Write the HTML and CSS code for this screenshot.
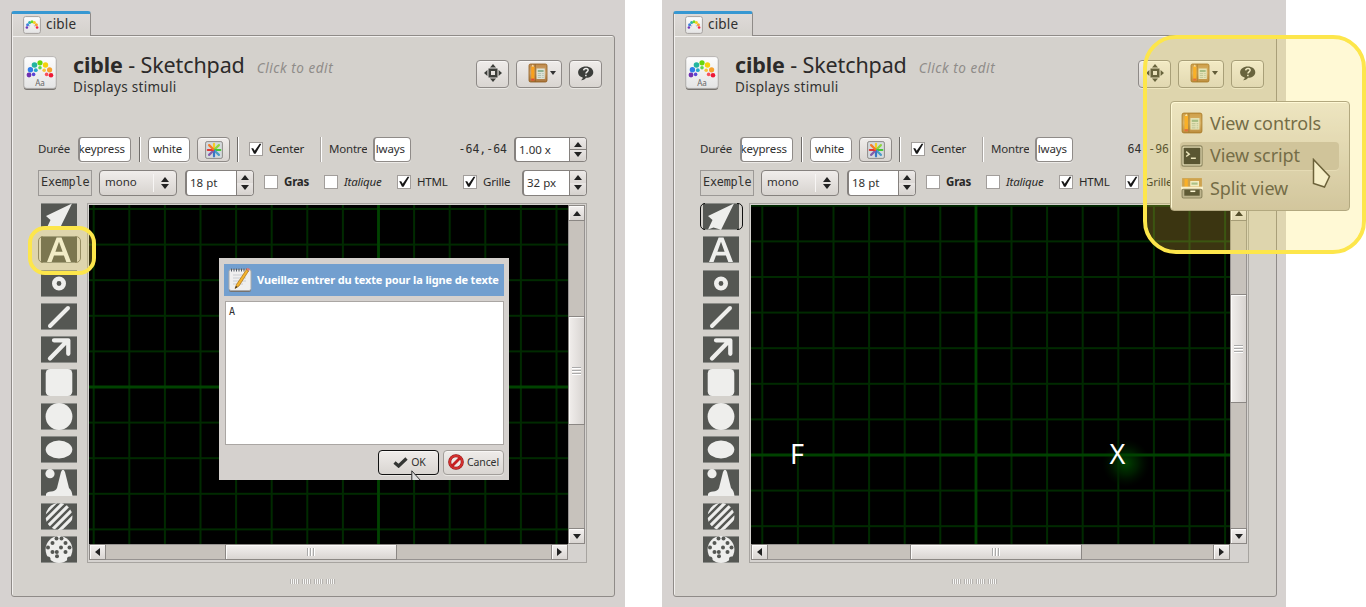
FILE: index.html
```html
<!DOCTYPE html>
<html lang="fr">
<head>
<meta charset="utf-8">
<title>cible - Sketchpad</title>
<link rel="stylesheet" href="styles.css">
</head>
<body>
<svg class="defs" width="0" height="0">
  <defs>
    <linearGradient id="paper" x1="0" y1="0" x2="0" y2="1"><stop offset="0" stop-color="#fdfdfd"/><stop offset="1" stop-color="#e4e4e4"/></linearGradient>
    <linearGradient id="wood" x1="0" y1="0" x2="0" y2="1"><stop offset="0" stop-color="#c08a4a"/><stop offset=".5" stop-color="#cda673"/><stop offset="1" stop-color="#a8733a"/></linearGradient>
    <radialGradient id="glow"><stop offset="0" stop-color="#004400"/><stop offset=".5" stop-color="#002600" stop-opacity=".75"/><stop offset="1" stop-color="#001000" stop-opacity="0"/></radialGradient>
    <symbol id="i-pad" viewBox="0 0 34 35">
      <rect x=".8" y="1.6" width="32.4" height="32.4" rx="3" fill="#77736f"/>
      <rect x=".8" y=".6" width="32.4" height="31.8" rx="3" fill="url(#paper)" stroke="#aaa7a4" stroke-width=".8"/>
      <circle cx="6" cy="19" r="2.4" fill="#7030b0"/><circle cx="7.4" cy="13.8" r="2.7" fill="#2f7de8"/><circle cx="11.5" cy="9" r="2.8" fill="#22b5a0"/><circle cx="17" cy="6.8" r="2.6" fill="#68d60c"/><circle cx="22.5" cy="9" r="2.7" fill="#f5d20a"/><circle cx="26.6" cy="13.8" r="2.6" fill="#f7a12c"/><circle cx="28" cy="19.2" r="2.3" fill="#ee1836"/>
      <circle cx="10.6" cy="18.4" r="1.8" fill="#5a46d6"/><circle cx="12.8" cy="14.2" r="1.9" fill="#27a8c8"/><circle cx="17" cy="11.8" r="1.8" fill="#5cd850"/><circle cx="21.2" cy="14.2" r="1.8" fill="#f7c63a"/><circle cx="23.6" cy="18.4" r="1.8" fill="#f8505a"/>
      <text x="17" y="30" text-anchor="middle" class="pad-text">Aa</text>
    </symbol>
    <symbol id="i-tab" viewBox="0 0 18 18">
      <rect x=".6" y=".6" width="16.8" height="16.8" rx="2" fill="url(#paper)" stroke="#a5a19e"/>
      <g><circle cx="3.900" cy="11.500" r="1.300" fill="#7038b8"/><circle cx="4.600" cy="8.700" r="1.500" fill="#4080dd"/><circle cx="6.600" cy="6.600" r="1.500" fill="#2bb0b0"/><circle cx="9" cy="5.800" r="1.500" fill="#6bd827"/><circle cx="11.400" cy="6.600" r="1.500" fill="#f5d020"/><circle cx="13.400" cy="8.700" r="1.500" fill="#f8a131"/><circle cx="14.100" cy="11.500" r="1.300" fill="#f4264b"/><path d="M6 10.800l1-2M12 10.800l-1-2" stroke="#c9b3d8"/></g>
    </symbol>
    <symbol id="i-full" viewBox="0 0 18 18"><g fill="#3c3e3a"><path d="M9 0l3 3.4H6zM9 18l3-3.4H6zM0 9l3.4-3v6zM18 9l-3.4-3v6z"/><path d="M4.5 4.5h9v9h-9zM7 7v4h4V7z" fill-rule="evenodd"/></g></symbol>
    <symbol id="i-book" viewBox="0 0 20 20">
      <rect x="1" y="1" width="18" height="18" rx="1.6" fill="url(#wood)" stroke="#8f5a1c" stroke-width=".8"/>
      <path d="M7.200 1.4v17.2" stroke="#81531e" stroke-width=".7"/>
      <path d="M3.2 4.2L4.8 1.8l1.6 2.4v13H3.2z" fill="#f9a11d"/><path d="M4.8 1.6l1.2 2H3.6z" fill="#f7e5c4"/><path d="M3.2 15.6h3.2v2H3.2z" fill="#d84e37"/>
      <rect x="8.6" y="5.500" width="8.2" height="10.500" fill="#dde3d8"/><path d="M9.8 7h5.8v2H9.8z" fill="#8db193"/><path d="M9.8 10.6h3.4M9.8 12.5h3.4M9.8 14.4h3.4M14.2 10.6h1.5M14.2 12.5h1.5M14.2 14.4h1.5" stroke="#b1c0b0"/>
    </symbol>
    <symbol id="i-term" viewBox="0 0 20 20"><rect x=".8" y=".8" width="18.4" height="18.4" rx="1.8" fill="#d9d7d2" stroke="#6c6a67"/><rect x="2.4" y="2.4" width="15.2" height="15.2" rx=".8" fill="#292b2b"/><path d="M4.700 6L7.500 8.300l-2.800 2.200M9 12h4.500" fill="none" stroke="#e4e4dc" stroke-width="1.300"/></symbol>
    <symbol id="i-split" viewBox="0 0 20 20"><path d="M1 1h18v9H1z" fill="#c09050"/><path d="M3.2 2h3v7h-3z" fill="#f9a11d"/><path d="M8.4 3.6h8v5h-8z" fill="#edf0e7"/><path d="M9.5 5h5.6v2H9.5z" fill="#94b69a"/><path d="M0 8.800h20v2.400H0z" fill="#f7f5f1"/><rect x="1" y="11.2" width="18" height="7.900" rx="1.3" fill="#a9a6a0" stroke="#6c6a67"/><path d="M3 11.500h14v5.500H3z" fill="#303230"/><path d="M8.500 13h4.500" stroke="#fff" stroke-width="1.400"/></symbol>
    <symbol id="i-help" viewBox="0 0 18 16"><path d="M9.3.5c4.6 0 8 2.5 8 6.1s-3.4 6-7.8 6c-.9 1.5-2.8 2.6-5.2 2.5 1.2-.9 1.8-1.8 1.7-2.9C3.100 11.400 1.100 9.500 1.100 6.800 1.100 3.100 4.700.5 9.300.5z" fill="#3c3e3b"/><path d="M7 4.700c.4-2.900 5-2.700 4.800-.1-.1 1.600-2.200 1.700-2.300 3.400M9.400 9.300v1.700" fill="none" stroke="#efeeec" stroke-width="1.600"/></symbol>
    <symbol id="i-color" viewBox="0 0 18 18"><rect x=".6" y=".6" width="16.800" height="16.800" rx="1.500" fill="#d5dadd" stroke="#8e8b88"/><g stroke-width="2.200" stroke-linecap="round"><path d="M9 8V2.800" stroke="#f4cc25"/><path d="M9.700 8.300l4.200-4.200" stroke="#8fd53b"/><path d="M10 9h5.300" stroke="#45c832"/><path d="M9.700 9.700l4.200 4.200" stroke="#4a9bc8"/><path d="M9 10v5.300" stroke="#3976c5"/><path d="M8.300 9.700l-4.200 4.200" stroke="#825dab"/><path d="M8 9H2.800" stroke="#e03332"/><path d="M8.300 8.300L4.100 4.100" stroke="#f47928"/></g></symbol>
    <symbol id="t-arrow" viewBox="0 0 36 27"><path d="M31 .5L5 13l4.500 4L5 26.500l5.500-2 5 1.500 2.500 1z"/></symbol>
    <symbol id="t-text" viewBox="0 0 36 27"><path d="M15.600 1.500h4.900L30 26h-4.700l-2.400-6.500H13L10.600 26H6zM14.400 15.800h7.200L18 5.800z" fill-rule="evenodd"/></symbol>
    <symbol id="t-dot" viewBox="0 0 36 27"><circle cx="18" cy="13.500" r="4.700" fill="none" stroke="#eeeeec" stroke-width="4.600"/></symbol>
    <symbol id="t-line" viewBox="0 0 36 27"><path d="M9 23L27 5" stroke="#eeeeec" stroke-width="4" stroke-linecap="round"/></symbol>
    <symbol id="t-vec" viewBox="0 0 36 27"><path d="M9 22.500L26 5M13 4.300h14.300v13.500" fill="none" stroke="#eeeeec" stroke-width="4.300" stroke-linecap="round" stroke-linejoin="round"/></symbol>
    <symbol id="t-rect" viewBox="0 0 36 27"><rect x="4.700" y="0" width="26.600" height="27" rx="4.500"/></symbol>
    <symbol id="t-circ" viewBox="0 0 36 27"><circle cx="18" cy="13.500" r="13.400"/></symbol>
    <symbol id="t-oval" viewBox="0 0 36 27"><ellipse cx="18" cy="13.500" rx="13.300" ry="9"/></symbol>
    <symbol id="t-gauss" viewBox="0 0 36 27"><circle cx="9" cy="4.700" r="4.600"/><path d="M5 27v-2q1-2.500 5-2.500 4.500-.2 6-3.500L20 3q2-4.500 4 0l4 16q3 2.500 3.500 8z"/></symbol>
    <symbol id="t-gabor" viewBox="0 0 36 27"><clipPath id="cg"><circle cx="18" cy="13.500" r="13.400"/></clipPath><path clip-path="url(#cg)" d="M0 14L18-4M0 22L26-4M1 29L34-4M9 29L38 0M17 29L38 8M25 29L38 16" stroke="#eeeeec" stroke-width="3.200"/></symbol>
    <symbol id="t-noise" viewBox="0 0 36 27"><circle cx="18" cy="13.500" r="13.400"/><g fill="#555753"><circle cx="15.500" cy="2.500" r="2"/><circle cx="20.500" cy="2.500" r="2"/><circle cx="11.500" cy="7" r="2"/><circle cx="24.500" cy="7" r="2"/><circle cx="7" cy="11.500" r="2"/><circle cx="20" cy="11.500" r="2"/><circle cx="28.500" cy="11.500" r="2"/><circle cx="11.500" cy="16" r="2"/><circle cx="15.800" cy="16" r="2"/><circle cx="24.500" cy="16" r="2"/><circle cx="16" cy="20.300" r="2"/><circle cx="7" cy="23" r="2.500"/><circle cx="28.500" cy="23" r="2.500"/></g></symbol>
    <symbol id="check" viewBox="0 0 12 12"><path d="M1.200 5.200h2l1.500 2.500L9.600.7h1.800L5.600 10.800H4z" fill="#171717"/></symbol>
    <pattern id="g1" x="3.700" y="3" width="35.600" height="35.600" patternUnits="userSpaceOnUse"><path d="M0 1h35.600M1 0v35.600" stroke="#002a00" stroke-width="2"/></pattern>
    <pattern id="g2" x="10.300" y="-.2" width="35.600" height="35.600" patternUnits="userSpaceOnUse"><path d="M0 1h35.600M1 0v35.600" stroke="#002a00" stroke-width="2"/></pattern>
  </defs>
</svg>

<div class="desktop">
  <section class="window">
    <div class="tab"><svg width="18" height="18"><use href="#i-tab"/></svg><span>cible</span></div>
    <div class="panel">
      <header class="header">
        <svg class="pad-icon" width="34" height="35"><use href="#i-pad"/></svg>
        <div class="heading">
          <div class="title-line"><h1><b>cible</b> - Sketchpad</h1><em>Click to edit</em></div>
          <p>Displays stimuli</p>
        </div>
        <div class="actions">
          <span class="btn"><svg width="18" height="18"><use href="#i-full"/></svg></span>
          <span class="btn wide"><svg width="20" height="20"><use href="#i-book"/></svg><i class="caret"></i></span>
          <span class="btn"><svg width="17" height="15"><use href="#i-help"/></svg></span>
        </div>
      </header>
      <div class="row row-a">
        <span class="label">Durée</span><span class="field clip">keypress</span><i class="sep"></i>
        <span class="field">white</span><span class="btn color"><svg width="18" height="18"><use href="#i-color"/></svg></span><i class="sep"></i>
        <span class="check"><i><svg width="12" height="12"><use href="#check"/></svg></i>Center</span><i class="sep light"></i>
        <span class="label montre">Montre</span><span class="field clip">lways</span>
        <span class="coords">-64,-64</span><span class="spin"><span>1.00 x</span><i></i></span>
      </div>
      <div class="row row-b">
        <span class="sample">Exemple</span><span class="combo"><span>mono</span><i></i></span><span class="spin"><span>18 pt</span><i></i></span>
        <span class="check"><i></i><b>Gras</b></span><span class="check"><i></i><em>Italique</em></span>
        <span class="check"><i><svg width="12" height="12"><use href="#check"/></svg></i>HTML</span>
        <span class="check"><i><svg width="12" height="12"><use href="#check"/></svg></i>Grille</span><span class="spin"><span>32 px</span><i></i></span>
      </div>
      <div class="workspace">
        <div class="tools">
          <span><svg><use href="#t-arrow"/></svg></span><span class="picked soft"><svg><use href="#t-text"/></svg></span><span><svg><use href="#t-dot"/></svg></span><span><svg><use href="#t-line"/></svg></span><span><svg><use href="#t-vec"/></svg></span><span><svg><use href="#t-rect"/></svg></span><span><svg><use href="#t-circ"/></svg></span><span><svg><use href="#t-oval"/></svg></span><span><svg><use href="#t-gauss"/></svg></span><span><svg><use href="#t-gabor"/></svg></span><span><svg><use href="#t-noise"/></svg></span>
        </div>
        <div class="frame">
          <svg class="canvas" width="479" height="339"><rect width="479" height="339"/><rect width="479" height="339" fill="url(#g1)"/><path d="M0 182h479M289.500 0v339" stroke="#004200" stroke-width="2.800"/></svg>
          <div class="vbar v1"><i class="up"></i><b></b><i class="down"></i></div>
          <div class="hbar h1"><i class="left"></i><b></b><i class="right"></i></div>
        </div>
      </div>
      <div class="grip"><i></i><i></i><i></i><i></i></div>
    </div>
    <div class="dialog">
      <div class="dialog-title">
        <svg width="24" height="25" viewBox="0 0 24 25"><rect x="1" y="2" width="22" height="22" rx="2" fill="#77736f"/><rect x="1" y="1.500" width="22" height="21" rx="2" fill="#efefef" stroke="#aaa"/><path d="M3 2h18" stroke="#505a66" stroke-width="3" stroke-dasharray="1 1.500"/><path d="M5 7h13M5 10h13M5 13h13M5 16h10" stroke="#c9cdd2"/><path d="M18.500 1.500l-10 15-1.500 4 4-2.500 9.500-15z" fill="#f4b42d" stroke="#a66d12" stroke-width=".7"/><path d="M18 1l3 2 1-2-2.500-1z" fill="#e47c78"/><path d="M7 20.500l1-2.500 1.500 1z" fill="#222"/></svg>
        <strong>Vueillez entrer du texte pour la ligne de texte</strong>
      </div>
      <div class="textarea">A</div>
      <div class="dialog-actions">
        <span class="btn ok"><svg width="15" height="11" viewBox="0 0 15 11"><path d="M1.500 5.500L5.600 9 13.500 1.500" fill="none" stroke="#343634" stroke-width="3.300"/></svg>OK</span>
        <span class="btn cancel"><svg width="16" height="16" viewBox="0 0 16 16"><circle cx="8" cy="8" r="6.300" fill="#efe8e6" stroke="#8e1115" stroke-width="3"/><circle cx="8" cy="8" r="6.300" fill="none" stroke="#d3302e" stroke-width="2"/><path d="M3.800 12.200l8.400-8.400" stroke="#c61e20" stroke-width="2.800"/></svg>Cancel</span>
      </div>
      <svg class="pointer-small" width="11" height="11" viewBox="0 0 11 11"><path d="M.8.800V11h8.800z" fill="#ddd"/><path d="M.8 11V.800L10 11" fill="none" stroke="#333"/></svg>
    </div>
    <div class="halo halo-tool"></div>
  </section>

  <section class="window second">
    <div class="tab"><svg width="18" height="18"><use href="#i-tab"/></svg><span>cible</span></div>
    <div class="panel">
      <header class="header">
        <svg class="pad-icon" width="34" height="35"><use href="#i-pad"/></svg>
        <div class="heading">
          <div class="title-line"><h1><b>cible</b> - Sketchpad</h1><em>Click to edit</em></div>
          <p>Displays stimuli</p>
        </div>
        <div class="actions">
          <span class="btn"><svg width="18" height="18"><use href="#i-full"/></svg></span>
          <span class="btn wide"><svg width="20" height="20"><use href="#i-book"/></svg><i class="caret"></i></span>
          <span class="btn"><svg width="17" height="15"><use href="#i-help"/></svg></span>
        </div>
      </header>
      <div class="row row-a">
        <span class="label">Durée</span><span class="field clip">keypress</span><i class="sep"></i>
        <span class="field">white</span><span class="btn color"><svg width="18" height="18"><use href="#i-color"/></svg></span><i class="sep"></i>
        <span class="check"><i><svg width="12" height="12"><use href="#check"/></svg></i>Center</span><i class="sep light"></i>
        <span class="label montre">Montre</span><span class="field clip">lways</span>
        <span class="coords">64,-96</span><span class="spin"><span></span><i></i></span>
      </div>
      <div class="row row-b">
        <span class="sample">Exemple</span><span class="combo"><span>mono</span><i></i></span><span class="spin"><span>18 pt</span><i></i></span>
        <span class="check"><i></i><b>Gras</b></span><span class="check"><i></i><em>Italique</em></span>
        <span class="check"><i><svg width="12" height="12"><use href="#check"/></svg></i>HTML</span>
        <span class="check"><i><svg width="12" height="12"><use href="#check"/></svg></i>Grille</span><span class="spin"><span></span><i></i></span>
      </div>
      <div class="workspace">
        <div class="tools">
          <span class="picked"><svg><use href="#t-arrow"/></svg></span><span><svg><use href="#t-text"/></svg></span><span><svg><use href="#t-dot"/></svg></span><span><svg><use href="#t-line"/></svg></span><span><svg><use href="#t-vec"/></svg></span><span><svg><use href="#t-rect"/></svg></span><span><svg><use href="#t-circ"/></svg></span><span><svg><use href="#t-oval"/></svg></span><span><svg><use href="#t-gauss"/></svg></span><span><svg><use href="#t-gabor"/></svg></span><span><svg><use href="#t-noise"/></svg></span>
        </div>
        <div class="frame">
          <svg class="canvas" width="479" height="339"><rect width="479" height="339"/><rect width="479" height="339" fill="url(#g2)"/><circle cx="375" cy="258" r="24" fill="url(#glow)"/><path d="M0 250h479M225 0v339" stroke="#004200" stroke-width="2.800"/><text x="46" y="258.500" text-anchor="middle">F</text><text x="366.500" y="258.500" text-anchor="middle">X</text></svg>
          <div class="vbar v2"><i class="up"></i><b></b><i class="down"></i></div>
          <div class="hbar h2"><i class="left"></i><b></b><i class="right"></i></div>
        </div>
      </div>
      <div class="grip"><i></i><i></i><i></i><i></i></div>
    </div>
    <div class="menu">
      <div><svg width="22" height="22"><use href="#i-book"/></svg>View controls</div>
      <div class="hover"><svg width="22" height="22"><use href="#i-term"/></svg>View script</div>
      <div><svg width="22" height="22"><use href="#i-split"/></svg>Split view</div>
      <svg class="pointer" width="19" height="31" viewBox="0 0 19 31"><path d="M1.500 1.500v24l11 3.500 5-10.500z" fill="#f4f2ef" stroke="#403b35" stroke-width="1.500"/></svg>
    </div>
    <div class="halo halo-menu"></div>
  </section>
</div>
</body>
</html>
```
FILE: styles.css
```css
* { box-sizing: border-box; }
body { margin: 0; width: 1366px; height: 607px; overflow: hidden; background: #fff; color: #30302f; font: 11.5px/15px "Noto Sans", sans-serif; }
.defs { position: absolute; }
svg { display: block; flex: none; }
.desktop { display: flex; gap: 37px; }
.window { position: relative; flex: none; width: 625px; height: 607px; padding: 11px 10px 10px 11px; background: #d6d2d0; }
.window.second { width: 624px; padding-right: 9px; }

.tab { position: relative; z-index: 1; display: flex; align-items: center; gap: 5px; width: 80px; height: 25px; padding: 0 0 1px 11px; border: 1px solid #8f8b88; border-top: 3px solid #3798d2; border-bottom: 0; border-radius: 3px 3px 0 0; background: linear-gradient(#dedad8, #d4d1cc); box-shadow: inset 1px 0 #eeebe8; font-size: 13.5px; letter-spacing: .2px; }
.panel { width: 604px; height: 562px; margin-top: -1px; padding: 21px 0 0; border: 1px solid #8f8b88; border-radius: 0 3px 3px 3px; background: #d4d1cc; box-shadow: inset 1px 1px #f2f0ee; }
.header { display: flex; height: 80px; padding: 0 12px 0 11px; }
.pad-icon { margin-top: -1px; }
.heading { margin: -5px 0 0 16px; flex: 1; }
.title-line { display: flex; align-items: baseline; gap: 12px; height: 26px; white-space: nowrap; }
h1 { margin: 0; font-size: 21.5px; line-height: 25px; font-weight: 400; color: #2c2a29; letter-spacing: -.12px; }
.title-line em { color: #8f8c89; font-size: 13.5px; letter-spacing: .55px; }
.heading p { margin: 0; font-size: 13.500px; line-height: 18px; letter-spacing: .3px; }
.pad-text { font: 8px "Noto Sans", sans-serif; fill: #666; }
.actions { display: flex; gap: 7px; margin-top: 3px; }
.btn { display: flex; align-items: center; justify-content: center; width: 33px; height: 28px; border: 1px solid #8e8a87; border-radius: 4px; background: linear-gradient(#efecea, #d9d5d1); box-shadow: inset 0 1px #f8f6f5, 0 1px #e9e7e3; }
.actions .btn { padding-bottom: 2px; }
.btn.wide { width: 46px; gap: 2px; padding-left: 5px; }
.caret { border: 3px solid transparent; border-top: 4px solid #333; border-bottom: 0; }

.row { display: grid; align-items: center; margin-left: 26px; white-space: nowrap; }
.row-a { height: 25px; grid-template-columns: 40px 53px 17px 42px 40px 19px 71px 9px 44px 38px 103px 73px; }
.row-b { height: 27px; margin-top: 7px; grid-template-columns: 61px 86px 79px 60px 73px 66px 59px 65px; }
.label, .check { letter-spacing: -.2px; padding-bottom: 2px; }
.montre { width: 38px; overflow: hidden; }
.field { display: flex; align-items: center; height: 25px; padding: 0 0 2px 4px; border: 1px solid #8f8b88; border-radius: 4px; background: #fff; box-shadow: 0 1px #eceae7; overflow: hidden; letter-spacing: -.1px; }
.field.clip { justify-content: flex-end; padding: 0 5px 2px 0; border-left-width: 2px; }
.row-a .color { justify-self: end; width: 33px; height: 25px; }
.sep { justify-self: center; width: 2px; height: 25px; background: linear-gradient(90deg, #6f6c69 50%, #fff 50%); }
.sep.light { justify-self: start; background: linear-gradient(90deg, #aaa6a2 50%, #fff 50%); }
.row-a > .sep:nth-child(6) { margin-right: 3px; }
.check { display: flex; align-items: center; gap: 6px; color: #292928; }
.check > i { flex: none; width: 14px; height: 14px; padding: 0; border: 1px solid #a29e9b; background: #fff; }
.coords { justify-self: end; margin-right: 7px; padding-bottom: 2px; font: 11.500px "DejaVu Sans Mono", monospace; }
.spin, .combo { display: flex; height: 26px; border: 1px solid #85817e; border-left-width: 2px; border-radius: 4px; background: #fff; overflow: hidden; align-items: center; }
.row-a .spin { height: 25px; }
.spin > span { flex: 1; padding: 0 0 1px 3px; }
.spin > i { width: 17px; height: 100%; border-left: 1px solid #85817e; background: linear-gradient(#edeae8, #dcd8d5 48%, #85817e 48%, #85817e 52%, #e8e5e3 52%, #d5d1cd); }
.spin > i, .combo > i { display: flex; flex-direction: column; justify-content: space-evenly; align-items: center; }
.spin > i::before, .combo > i::before { content: ""; border: 4px solid transparent; border-top: 0; border-bottom: 5px solid #222; }
.spin > i::after, .combo > i::after { content: ""; border: 4px solid transparent; border-bottom: 0; border-top: 5px solid #222; }
.combo { width: 78px; border-left-width: 1px; background: linear-gradient(#f0edeb, #d7d3cf); }
.combo > span { flex: 1; padding: 0 0 2px 5px; }
.combo > i { width: 23px; height: 18px; border-left: 1px solid #f7f5f4; justify-content: center; gap: 2px; }
.row-b > .spin:nth-child(3) { width: 69px; }
.sample { width: 54px; height: 26px; border: 1px solid #9c9996; padding: 3px 0 0 2px; font: 11.800px/16px "DejaVu Sans Mono", monospace; letter-spacing: -.2px; }

.workspace { display: flex; justify-content: space-between; height: 360px; margin: 7px 27px 0 29px; }
.tools { display: flex; flex-direction: column; justify-content: space-between; width: 36px; }
.tools span { position: relative; width: 36px; height: 27px; background: #555753; box-shadow: inset 0 1px #8c8d89, inset 0 -1px #8c8d89; }
.tools svg { width: 36px; height: 27px; fill: #eeeeec; }
.tools .picked::after { content: ""; position: absolute; inset: 0 -4px 0 -3px; border: 1px solid #111; border-radius: 5px; clip-path: polygon(0 0, 5px 0, 5px 100%, 37px 100%, 37px 0, 100% 0, 100% 100%, 0 100%); }
.tools .soft::after { border-color: #77736a; }
.frame { display: grid; width: 500px; height: 360px; grid-template: 339px 17px / 479px 17px; padding-top: 1px; padding-left: 1px; border: 1px solid #a7a4a0; background: #d5d2cf; }
.canvas text { font: 27px "Noto Sans", sans-serif; fill: #fff; }
.vbar, .hbar { display: flex; background: #c7c2bc; border: 1px solid #969290; }
.vbar { flex-direction: column; }
.hbar { height: 16px; }
.vbar > *, .hbar > * { display: flex; align-items: center; justify-content: center; flex: none; border: 1px solid #8b8784; background: linear-gradient(#f3f0ef, #d9d5d2); box-shadow: inset 1px 1px #fcfbfa; }
.vbar > i { height: 16px; margin: -1px; }
.hbar > i { width: 17px; margin: -1px; }
.vbar > b { height: 109px; background: linear-gradient(90deg, #f1eeec, #d8d4d1); margin-left: -1px; margin-right: -1px; }
.hbar > b { width: 172px; margin-top: -1px; margin-bottom: -1px; }
.v1 > b { margin-top: 96px; }
.v2 > b { margin-top: 74px; }
.h1 > b { margin-left: 120px; }
.h2 > b { margin-left: 143px; }
.vbar > i:last-child { margin-top: auto; }
.hbar > i:last-child { margin-left: auto; }
.vbar > i::after, .hbar > i::after { content: ""; border: 4px solid transparent; }
.up::after { border-top: 0 !important; border-bottom: 5px solid #222 !important; }
.down::after { border-bottom: 0 !important; border-top: 5px solid #222 !important; }
.left::after { border-left: 0 !important; border-right: 5px solid #222 !important; }
.right::after { border-right: 0 !important; border-left: 5px solid #222 !important; }
.vbar > b::after { content: ""; width: 9px; height: 8px; background: repeating-linear-gradient(#aaa 0 1px, #fff 1px 2px, transparent 2px 3px); }
.hbar > b::after { content: ""; width: 9px; height: 8px; background: repeating-linear-gradient(90deg, #aaa 0 1px, #fff 1px 2px, transparent 2px 3px); }
.grip { display: flex; justify-content: center; gap: 3px; margin: 16px 2px 0 0; }
.grip i { width: 9px; height: 5px; background: repeating-linear-gradient(90deg, #aeaba8 0 1px, #fff 1px 2px); opacity: .8; }

.dialog { position: absolute; left: 219px; top: 258px; width: 290px; height: 222px; padding: 6px 5px; background: #d5d1ce; overflow: hidden; }
.dialog-title { display: flex; align-items: center; gap: 5px; height: 32px; padding-left: 4px; background: #729fcf; color: #fff; font-size: 11px; white-space: nowrap; letter-spacing: -.14px; }
.dialog-title strong { padding-bottom: 2px; }
.textarea { height: 144px; margin: 5px 0 0 1px; padding: 2px 3px; border: 1px solid #aaa6a3; background: #fff; font: 10px/16px "DejaVu Sans Mono", monospace; }
.dialog-actions { display: flex; justify-content: flex-end; gap: 4px; margin-top: 5px; }
.dialog .btn { width: 61px; height: 25px; padding-bottom: 1px; font-size: 10.500px; letter-spacing: -.1px; }
.dialog .ok { gap: 3px; padding-left: 2px; border-color: #111; }
.dialog .cancel { gap: 3px; border-color: #a29e9a; }
.pointer-small { position: absolute; left: 192px; top: 212px; }

.halo { position: absolute; border: 5px solid #fde64b; background: rgba(253, 230, 75, .23); background-clip: padding-box; }
.halo-tool { left: 28px; top: 226px; width: 68px; height: 49px; border-width: 4px; border-radius: 17px; }
.halo-menu { left: 481px; top: 35px; width: 223px; height: 219px; border-width: 4.500px; border-radius: 33px; }
.menu { position: absolute; left: 508px; top: 101px; width: 180px; height: 110px; padding: 7px 10px 0 9px; border: 1px solid #9b9690; border-radius: 4px; background: linear-gradient(#e9e6e4, #c5bdb6); box-shadow: inset 1px 1px #fff; font-size: 18px; color: #4b4947; }
.menu > div { display: flex; align-items: center; gap: 7px; height: 28px; margin-bottom: 4.500px; padding-left: 1px; border-radius: 4px; letter-spacing: -.1px; }
.menu .hover { background: #c2bab3; box-shadow: 0 1px #ded9d5; }
.pointer { position: absolute; left: 141px; top: 56px; }
```
